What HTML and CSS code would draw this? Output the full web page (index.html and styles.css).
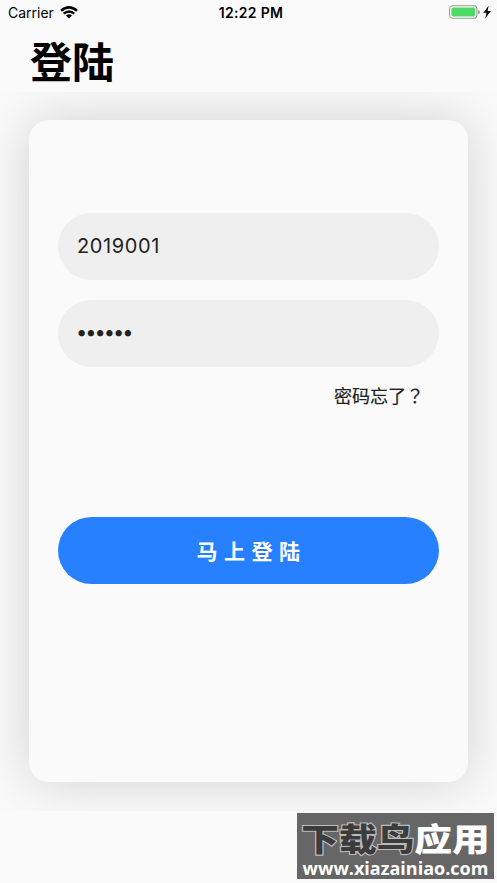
FILE: index.html
```
<!DOCTYPE html>
<html lang="zh-CN">

<head>
  <meta charset="UTF-8">
  <meta name="viewport" content="width=device-width, initial-scale=1.0">
  <title>登陆</title>
  <link rel="stylesheet" href="styles.css">
</head>

<body>
  <div class="status-bar">
    <div class="carrier">
      <span>Carrier</span>
      <svg class="wifi" width="18" height="13" viewBox="0 0 18 13">
        <path d="M1 4.8Q9 -2 17 4.8" fill="none" stroke="#000" stroke-width="2.5" />
        <path d="M3.7 7.7Q9 3.2 14.3 7.7" fill="none" stroke="#000" stroke-width="2.3" />
        <path d="M6 9.4Q9 7 12 9.4L9 12.6Z" fill="#000" />
      </svg>
    </div>
    <div class="time">12:22 PM</div>
    <div class="power">
      <svg width="43" height="15" viewBox="0 0 43 15">
        <rect x="0.6" y="0.8" width="27.3" height="12.4" rx="3.4" fill="#fff" stroke="#979797" stroke-width="1.1" />
        <rect x="2.4" y="2.6" width="23.7" height="8.8" rx="1.6" fill="#4cd964" />
        <path d="M29.2 4.9Q31 5.3 31 7.1Q31 8.9 29.2 9.3Z" fill="#979797" />
        <path d="M39.6 0.8L34.4 7.8H37.6L36.2 13.2L42 6H38.6Z" fill="#000" />
      </svg>
    </div>
  </div>

  <h1>登陆</h1>

  <main class="content">
    <form id="loginForm" class="card">
      <input type="text" id="username" value="2019001">
      <input type="password" id="password" value="123456">
      <a class="forgot">密码忘了<span class="mark" lang="zh-TW">？</span></a>
      <button type="submit">马上登陆</button>
    </form>
  </main>

  <div class="watermark">
    <div class="brand"><span class="dark">下载鸟</span><span>应用</span></div>
    <div class="site">www.xiazainiao.com</div>
  </div>

  <script>
    document.getElementById("loginForm").addEventListener("submit", (event) => {
      event.preventDefault();
    });
  </script>
</body>

</html>
```
FILE: styles.css
```
* {
  box-sizing: border-box;
}

body {
  font-family: Inter, "Noto Sans CJK SC", sans-serif;
  margin: 0;
  height: 883px;
  overflow: hidden;
  position: relative;
  background: #fafafa;
  color: #000;
}

.status-bar {
  display: grid;
  grid-template-columns: 1fr auto 1fr;
  align-items: center;
  height: 26px;
  padding: 0 5px 0 8px;
  font-size: 14px;
  line-height: 26px;
}

.carrier {
  display: flex;
  align-items: center;
  gap: 6px;
}

.wifi {
  margin-top: -2px;
}

.time {
  padding-left: 2px;
  font-weight: 600;
  letter-spacing: 0.3px;
}

.power {
  display: flex;
  justify-content: flex-end;
}

.power svg {
  margin-top: -1px;
}

h1 {
  height: 66px;
  margin: 0;
  padding-left: 30px;
  font-size: 42px;
  font-weight: 700;
  line-height: 73px;
}

.content {
  height: 719px;
  padding: 28px 29px 29px;
  overflow: hidden;
}

.card {
  display: flex;
  flex-direction: column;
  height: 662px;
  padding: 93px 29px 0;
  background: #fafafa;
  border-radius: 20px;
  box-shadow: 0 0 54px rgba(0, 0, 0, 0.17);
}

.card input {
  width: 100%;
  height: 67px;
  margin: 0 0 20px;
  padding: 0 20px 2px 19px;
  border: none;
  border-radius: 34px;
  outline: none;
  background: #efefef;
  color: #222;
  font-family: inherit;
  font-size: 20px;
  letter-spacing: 0.6px;
}

#password {
  padding-left: 18px;
  padding-bottom: 3px;
  letter-spacing: -2px;
}

.forgot {
  align-self: flex-end;
  height: 26px;
  margin-right: 15px;
  margin-top: -5px;
  color: #222;
  font-size: 18px;
  line-height: 26px;
  -webkit-text-stroke: 0.2px #222;
}

.forgot .mark {
  font-family: "Noto Sans CJK TC", sans-serif;
}

.card button {
  height: 67px;
  margin-top: 109px;
  padding: 0 0 2px 6px;
  border: none;
  border-radius: 34px;
  background: #2680ff;
  color: #fff;
  font-family: inherit;
  font-size: 21px;
  font-weight: 700;
  letter-spacing: 6.5px;
  cursor: pointer;
}

.watermark {
  position: absolute;
  left: 297px;
  top: 813px;
  width: 197px;
  height: 66px;
  background: #666;
  color: #fff;
  text-align: center;
  white-space: nowrap;
}

.brand {
  height: 46px;
  font-size: 37px;
  font-weight: 900;
  line-height: 54px;
  transform: scale(1.02, 0.87);
}

.brand .dark {
  color: #3c3c3c;
  -webkit-text-stroke: 2.5px #bbb;
  paint-order: stroke fill;
}

.site {
  font-family: "Open Sans", sans-serif;
  font-size: 18px;
  font-weight: 700;
  line-height: 18px;
}
```
